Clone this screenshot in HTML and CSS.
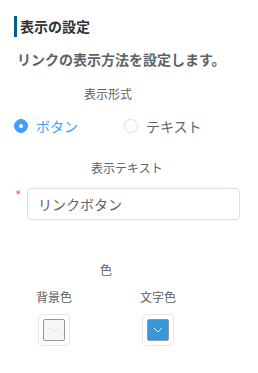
FILE: index.html
```html
<!DOCTYPE html>
<html lang="ja">
<head>
    <meta charset="UTF-8">
    <meta name="viewport" content="width=device-width, initial-scale=1.0">
    <title>表示の設定</title>
    <link rel="stylesheet" href="styles.css">
</head>
<body>
    <div class="panel">
        <h2 class="section-title">表示の設定</h2>
        <p class="section-desc">リンクの表示方法を設定します。</p>

        <div class="field-label label-format">表示形式</div>
        <div class="radio-group">
            <label class="radio checked">
                <span class="radio-input"></span>
                <span class="radio-text">ボタン</span>
            </label>
            <label class="radio">
                <span class="radio-input"></span>
                <span class="radio-text">テキスト</span>
            </label>
        </div>

        <div class="field-label label-text">表示テキスト</div>
        <div class="input-row">
            <span class="required">*</span>
            <input type="text" class="text-input" value="リンクボタン">
        </div>

        <div class="field-label label-color">色</div>
        <div class="color-grid">
            <div class="color-item">
                <div class="color-label">背景色</div>
                <div class="color-picker">
                    <span class="color-swatch swatch-light">
                        <svg width="10" height="6" viewBox="0 0 10 6"><polyline points="1,1 5,5 9,1" fill="none" stroke="#dcdfe6" stroke-width="1"/></svg>
                    </span>
                </div>
            </div>
            <div class="color-item">
                <div class="color-label">文字色</div>
                <div class="color-picker">
                    <span class="color-swatch swatch-blue">
                        <svg width="10" height="6" viewBox="0 0 10 6"><polyline points="1,1 5,5 9,1" fill="none" stroke="#ffffff" stroke-width="1"/></svg>
                    </span>
                </div>
            </div>
        </div>
    </div>
</body>
</html>
```

FILE: styles.css
```css
body {
    margin: 0;
    padding: 0;
    background: #fff;
    font-family: "Noto Sans CJK JP", "Noto Sans", sans-serif;
    color: #606266;
}

.panel {
    width: 258px;
    padding-top: 16px;
}

.section-title {
    margin: 0 0 0 14px;
    padding-left: 3px;
    border-left: 3px solid #0a5b8c;
    font-size: 14px;
    line-height: 21px;
    font-weight: bold;
    color: #303133;
}

.section-desc {
    margin: 12px 0 0;
    padding-left: 17px;
    font-size: 14px;
    line-height: 20px;
    font-weight: bold;
    color: #606266;
}

.field-label {
    font-size: 12px;
    line-height: 16px;
    color: #606266;
}

.label-format {
    margin-top: 17px;
    padding-left: 84px;
}

.label-text {
    margin-top: 24px;
    padding-left: 91px;
}

.label-color {
    margin-top: 42px;
    padding-left: 100px;
}

.radio-group {
    display: flex;
    margin-top: 14px;
    padding-left: 14px;
    height: 20px;
    align-items: center;
}

.radio {
    display: flex;
    align-items: center;
    font-size: 14px;
    line-height: 20px;
    color: #606266;
    cursor: pointer;
}

.radio + .radio {
    margin-left: 46px;
}

.radio-input {
    width: 12px;
    height: 12px;
    border: 1px solid #dcdfe6;
    border-radius: 50%;
    background: #fff;
    margin-right: 8px;
    position: relative;
    box-sizing: content-box;
}

.radio.checked .radio-input {
    border-color: #409eff;
    background: #409eff;
}

.radio.checked .radio-input::after {
    content: "";
    position: absolute;
    left: 4px;
    top: 4px;
    width: 4px;
    height: 4px;
    border-radius: 50%;
    background: #fff;
}

.radio.checked .radio-text {
    color: #409eff;
}

.input-row {
    display: flex;
    margin-top: 12px;
    padding-left: 15px;
}

.required {
    width: 12px;
    color: #f56c6c;
    font-size: 14px;
    line-height: 14px;
}

.text-input {
    width: 213px;
    height: 32px;
    box-sizing: border-box;
    border: 1px solid #dcdfe6;
    border-radius: 4px;
    padding: 0 10px;
    font-family: "Noto Sans CJK JP", "Noto Sans", sans-serif;
    font-size: 14px;
    color: #606266;
    outline: none;
}

.color-grid {
    display: grid;
    grid-template-columns: 104px 104px;
    margin-top: 11px;
    padding-left: 36px;
}

.color-label {
    font-size: 12px;
    line-height: 16px;
    color: #606266;
}

.color-picker {
    width: 32px;
    height: 32px;
    box-sizing: border-box;
    margin: 9px 0 0 2px;
    border: 1px solid #e4e7ed;
    border-radius: 4px;
    padding: 4px;
}

.color-swatch {
    display: flex;
    align-items: center;
    justify-content: center;
    width: 22px;
    height: 22px;
    box-sizing: border-box;
    border: 1px solid #999;
    border-radius: 2px;
}

.swatch-light {
    background: #f5f6f8;
}

.swatch-blue {
    background: #3498db;
}
```
